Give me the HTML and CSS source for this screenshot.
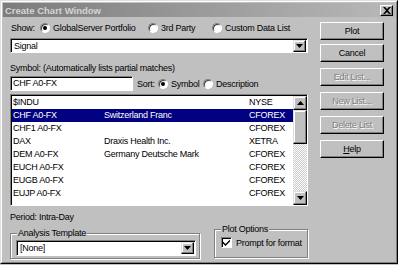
FILE: index.html
```html
<!DOCTYPE html>
<html lang="en">
<head>
    <meta charset="UTF-8">
    <title>Create Chart Window</title>
    <link rel="stylesheet" href="styles.css">
</head>
<body>
    <div class="window">
        <div class="window-inner">
            <div class="titlebar">
                <span class="title">Create Chart Window</span>
                <div class="close-btn">
                    <svg width="8" height="7" viewBox="0 0 8 7"><path d="M0 0h2l2 2 2-2h2L5 3.5 8 7H6L4 5 2 7H0l3-3.5z" fill="#000"/></svg>
                </div>
            </div>

            <div class="dialog">
                <div class="main">
                    <div class="show-row">
                        <span class="show-label">Show:</span>
                        <span class="opt opt-portfolio"><i class="radio on"></i>GlobalServer Portfolio</span>
                        <span class="opt opt-party"><i class="radio"></i>3rd Party</span>
                        <span class="opt"><i class="radio"></i>Custom Data List</span>
                    </div>

                    <div class="combo combo-signal">
                        <span class="combo-text">Signal</span>
                        <div class="drop-btn"><svg width="7" height="4" viewBox="0 0 7 4"><path d="M0 0h7L3.5 4z" fill="#000"/></svg></div>
                    </div>

                    <div class="symbol-label">Symbol: (Automatically lists partial matches)</div>

                    <div class="search-row">
                        <div class="field search-field">CHF A0-FX</div>
                        <span class="sort-label">Sort:</span>
                        <span class="opt opt-symbol"><i class="radio on"></i>Symbol</span>
                        <span class="opt"><i class="radio"></i>Description</span>
                    </div>

                    <div class="list">
                        <div class="rows">
                            <div class="row"><span>$INDU</span><span></span><span>NYSE</span></div>
                            <div class="row sel"><span>CHF A0-FX</span><span>Switzerland Franc</span><span>CFOREX</span></div>
                            <div class="row"><span>CHF1 A0-FX</span><span></span><span>CFOREX</span></div>
                            <div class="row"><span>DAX</span><span>Draxis Health Inc.</span><span>XETRA</span></div>
                            <div class="row"><span>DEM A0-FX</span><span>Germany Deutsche Mark</span><span>CFOREX</span></div>
                            <div class="row"><span>EUCH A0-FX</span><span></span><span>CFOREX</span></div>
                            <div class="row"><span>EUGB A0-FX</span><span></span><span>CFOREX</span></div>
                            <div class="row"><span>EUJP A0-FX</span><span></span><span>CFOREX</span></div>
                        </div>
                        <div class="scrollbar">
                            <div class="sb-btn"><svg width="7" height="4" viewBox="0 0 7 4"><path d="M3.5 0L7 4H0z" fill="#000"/></svg></div>
                            <div class="sb-thumb"></div>
                            <div class="sb-track"></div>
                            <div class="sb-btn"><svg width="7" height="4" viewBox="0 0 7 4"><path d="M0 0h7L3.5 4z" fill="#000"/></svg></div>
                        </div>
                    </div>

                    <div class="period">Period: Intra-Day</div>

                    <div class="groups">
                        <div class="group group-template">
                            <span class="legend">Analysis Template</span>
                            <div class="combo combo-template">
                                <span class="combo-text">[None]</span>
                                <div class="drop-btn"><svg width="7" height="4" viewBox="0 0 7 4"><path d="M0 0h7L3.5 4z" fill="#000"/></svg></div>
                            </div>
                        </div>
                        <div class="group group-options">
                            <span class="legend">Plot Options</span>
                            <div class="check-row">
                                <div class="checkbox"><svg width="7" height="7" viewBox="0 0 7 7"><path d="M0 2.5l2.5 2.5L7 0.5v2L2.5 7 0 4.5z" fill="#000"/></svg></div>
                                Prompt for format
                            </div>
                        </div>
                    </div>
                </div>

                <div class="buttons">
                    <div class="btn">Plot</div>
                    <div class="btn">Cancel</div>
                    <div class="btn disabled btn-first-edit">Edit List...</div>
                    <div class="btn disabled">New List...</div>
                    <div class="btn disabled">Delete List</div>
                    <div class="btn"><span><u>H</u>elp</span></div>
                </div>
            </div>
        </div>
    </div>
</body>
</html>
```

FILE: styles.css
```css
* {
    margin: 0;
    padding: 0;
    box-sizing: border-box;
}

body {
    width: 398px;
    height: 265px;
    overflow: hidden;
    background-color: #c0c0c0;
    font-family: "Liberation Sans", Arial, sans-serif;
    font-size: 9px;
    letter-spacing: -0.25px;
    color: #000;
}

.window {
    width: 398px;
    height: 264px;
    border: 1px solid;
    border-color: #dfdfdf #000 #000 #dfdfdf;
}

.window-inner {
    height: 100%;
    border: 1px solid;
    border-color: #fff #808080 #808080 #fff;
    padding: 1px;
}

.titlebar {
    height: 14px;
    display: flex;
    align-items: center;
    justify-content: space-between;
    padding: 0 2px 0 2px;
    background: linear-gradient(to right, #7c7c7c, #b8b8b8);
}

.title {
    color: #d4d4d4;
    font-weight: bold;
    font-size: 9.5px;
    letter-spacing: 0;
}

.close-btn {
    width: 13px;
    height: 11px;
    display: flex;
    align-items: center;
    justify-content: center;
    background-color: #c0c0c0;
    border: 1px solid;
    border-color: #fff #000 #000 #fff;
    box-shadow: inset -1px -1px #808080;
}

.dialog {
    display: flex;
    gap: 12px;
    padding-left: 7px;
}

.main {
    width: 298px;
}

/* show row */
.show-row {
    height: 14px;
    margin-top: 4px;
    display: flex;
    align-items: center;
}

.show-label {
    margin-left: 1px;
    width: 29px;
}

.opt {
    display: flex;
    align-items: center;
}

.opt-portfolio {
    width: 108px;
}

.opt-party {
    width: 64px;
}

.radio {
    width: 10px;
    height: 10px;
    margin-right: 3px;
    border-radius: 50%;
    background-color: #fff;
    border: 1px solid;
    border-color: #808080 #fff #fff #808080;
    box-shadow: inset 1px 1px #404040;
    position: relative;
}

.radio.on::after {
    content: "";
    position: absolute;
    left: 2px;
    top: 2px;
    width: 4px;
    height: 4px;
    border-radius: 50%;
    background-color: #000;
}

/* sunken fields */
.field,
.combo {
    background-color: #fff;
    border: 1px solid;
    border-color: #808080 #fff #fff #808080;
    box-shadow: inset 1px 1px #000;
}

.combo {
    height: 15px;
    display: flex;
    align-items: center;
    justify-content: space-between;
    padding: 1px 1px 1px 3px;
}

.combo-signal {
    margin-top: 3px;
}

.drop-btn,
.sb-btn {
    width: 13px;
    height: 12px;
    display: flex;
    align-items: center;
    justify-content: center;
    background-color: #c0c0c0;
    border: 1px solid;
    border-color: #dfdfdf #000 #000 #dfdfdf;
    box-shadow: inset -1px -1px #808080, inset 1px 1px #fff;
}

.symbol-label {
    margin-top: 9px;
    height: 12px;
    line-height: 12px;
}

.search-row {
    margin-top: 2px;
    height: 15px;
    display: flex;
    align-items: center;
}

.search-field {
    width: 123px;
    height: 15px;
    line-height: 13px;
    padding-left: 2px;
}

.sort-label {
    margin-left: 4px;
    width: 21px;
}

.opt-symbol {
    width: 45px;
}

/* list */
.list {
    margin-top: 3px;
    height: 112px;
    display: flex;
    border: 1px solid;
    border-color: #808080 #fff #fff #808080;
    box-shadow: inset 1px 1px #000;
    background-color: #fff;
    padding: 1px 0 0 1px;
}

.rows {
    flex: 1;
}

.row {
    height: 13px;
    line-height: 13px;
    display: grid;
    grid-template-columns: 91px 145px 1fr;
    padding-left: 1px;
}

.row.sel {
    background-color: #000080;
    color: #fff;
}

.scrollbar {
    width: 14px;
    display: flex;
    flex-direction: column;
}

.sb-btn {
    width: 14px;
    height: 14px;
}

.sb-thumb {
    height: 34px;
    background-color: #c0c0c0;
    border: 1px solid;
    border-color: #dfdfdf #000 #000 #dfdfdf;
    box-shadow: inset -1px -1px #808080, inset 1px 1px #fff;
}

.sb-track {
    flex: 1;
    background: repeating-conic-gradient(#fff 0 25%, #c8c8c8 0 50%) 0 0 / 2px 2px;
}

.period {
    margin-top: 5px;
    height: 12px;
    line-height: 12px;
}

/* group boxes */
.groups {
    margin-top: 4px;
    display: flex;
    align-items: flex-start;
    gap: 14px;
}

.group {
    position: relative;
    border: 1px solid #808080;
    box-shadow: 1px 1px #fff, inset 1px 1px #fff;
}

.legend {
    position: absolute;
    top: -6px;
    left: 6px;
    padding: 0 1px;
    background-color: #c0c0c0;
    line-height: 10px;
}

.group-template {
    width: 190px;
    height: 26px;
    margin-top: 6px;
    padding: 6px 0 0 5px;
}

.combo-template {
    width: 180px;
    height: 16px;
}

.group-options {
    width: 94px;
    height: 29px;
    margin-top: 2px;
    padding: 7px 0 0 6px;
}

.check-row {
    display: flex;
    align-items: center;
    gap: 4px;
}

.checkbox {
    width: 11px;
    height: 11px;
    display: flex;
    align-items: center;
    justify-content: center;
    background-color: #fff;
    border: 1px solid;
    border-color: #808080 #fff #fff #808080;
    box-shadow: inset 1px 1px #000;
}

/* buttons */
.buttons {
    width: 64px;
    padding-top: 5px;
    display: flex;
    flex-direction: column;
    gap: 6px;
}

.btn {
    height: 18px;
    display: flex;
    align-items: center;
    justify-content: center;
    background-color: #c0c0c0;
    border: 1px solid;
    border-color: #fff #000 #000 #fff;
    box-shadow: inset -1px -1px #808080;
}

.btn:nth-child(2) {
    margin-top: -2px;
}

.btn.disabled {
    color: #808080;
    text-shadow: 1px 1px #fff;
}
```
